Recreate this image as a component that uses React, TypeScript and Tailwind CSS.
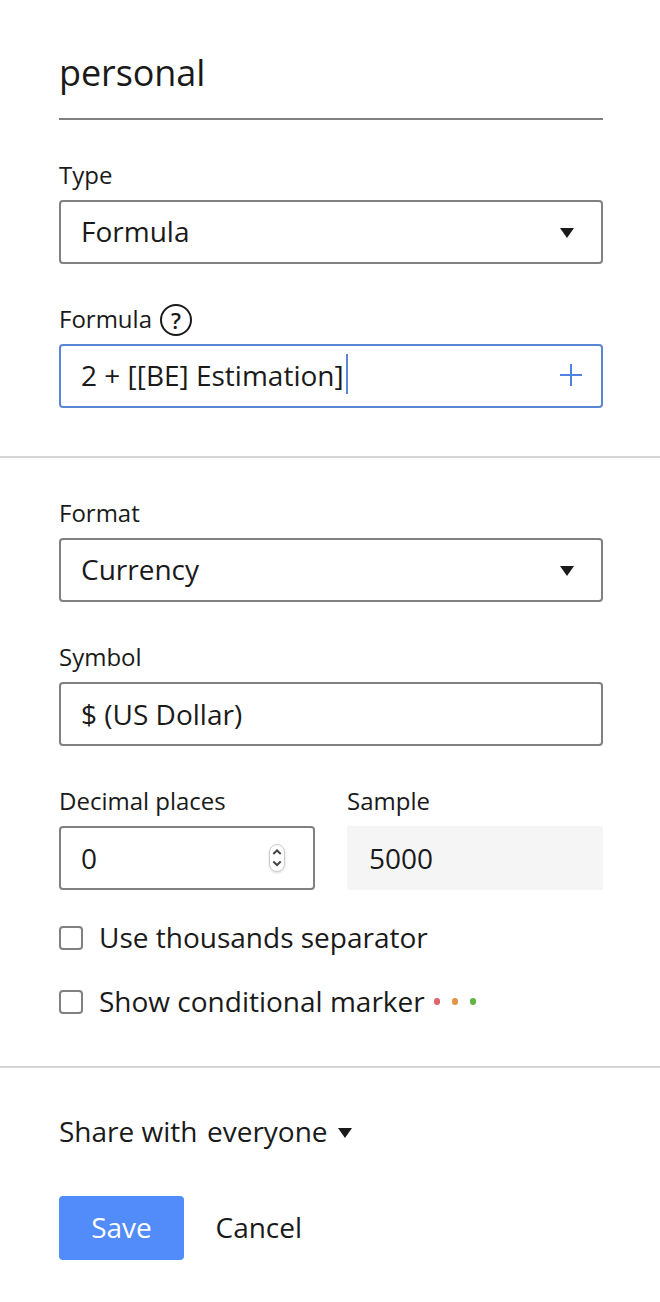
import type { ReactNode } from "react";

function Label({ children }: { children: ReactNode }) {
  return <div className="flex h-8 items-center gap-2 text-[24px] leading-8">{children}</div>;
}

function Triangle() {
  return (
    <svg width="14" height="10" viewBox="0 0 14 10" className="shrink-0">
      <path d="M0 0H14L7 10Z" fill="#1a1a1a" />
    </svg>
  );
}

function Select({ label, value }: { label: string; value: string }) {
  return (
    <div>
      <Label>
        <span className="pb-0.5">{label}</span>
      </Label>
      <button className="mt-2 flex h-16 w-full items-center justify-between rounded-[4px] border-2 border-[#808080] pr-[27px] pl-5 text-[28px]">
        <span className="pb-0.5">{value}</span>
        <span className="pt-0.5">
          <Triangle />
        </span>
      </button>
    </div>
  );
}

function Check({ label, children }: { label: string; children?: ReactNode }) {
  return (
    <div className="flex h-8 items-center text-[28px]">
      <span className="mr-4 size-6 rounded-[4px] border-2 border-[#808080]" />
      <span className="pb-0.5">{label}</span>
      {children}
    </div>
  );
}

export default function App() {
  return (
    <main className="h-[1302px] w-[660px] overflow-hidden bg-white font-['Open_Sans',sans-serif] text-[#1a1a1a]">
      <section className="h-[458px] border-b-2 border-[#d6d6d6] pr-[57px] pl-[59px] pt-[26px]">
        <h1 className="h-[94px] border-b-2 border-[#808080] text-[36px] leading-[94px] tracking-[-0.1px]">personal</h1>
        <div className="mt-10">
          <Select label="Type" value="Formula" />
        </div>
        <div className="mt-10">
          <Label>
            <span className="pb-0.5">Formula</span>
            <span className="flex size-8 items-center justify-center rounded-full border-2 border-[#1a1a1a] text-[22px] leading-none font-semibold">
              ?
            </span>
          </Label>
          <div className="mt-2 flex h-16 items-center rounded-[4px] border-2 border-[#5a86d6] pr-[19px] pl-5 text-[28px]">
            <span className="pb-0.5">2 + [[BE] Estimation]</span>
            <span className="mb-1 ml-0.5 h-10 w-0.5 bg-[#5a86d6]" />
            <svg className="mb-0.5 ml-auto" width="22" height="22" viewBox="0 0 22 22" stroke="#5082e2" strokeWidth="2">
              <path d="M11 0V22M0 11H22" />
            </svg>
          </div>
        </div>
      </section>
      <section className="h-[610px] border-b-2 border-[#d6d6d6] pr-[57px] pl-[59px] pt-10">
        <Select label="Format" value="Currency" />
        <div className="mt-10">
          <Label>
            <span className="pb-0.5">Symbol</span>
          </Label>
          <div className="mt-2 flex h-16 items-center rounded-[4px] border-2 border-[#808080] px-5 text-[28px]">$ (US Dollar)</div>
        </div>
        <div className="mt-10 flex gap-8">
          <div className="w-64">
            <Label>
              <span className="pb-0.5">Decimal places</span>
            </Label>
            <div className="mt-2 flex h-16 items-center justify-between rounded-[4px] border-2 border-[#808080] pr-7 pl-5 text-[28px]">
              <span>0</span>
              <svg width="16" height="28" viewBox="0 0 16 28" fill="none" className="drop-shadow-[0_1px_1px_rgba(0,0,0,0.15)]">
                <rect x=".5" y=".5" width="15" height="27" rx="7.5" fill="#fff" stroke="#ccc" />
                <path d="m4.3 10 3.7-3.5 3.7 3.5M4.3 17.5l3.7 3.5 3.7-3.5" stroke="#444" strokeWidth="2" />
              </svg>
            </div>
          </div>
          <div className="w-64">
            <Label>
              <span className="pb-0.5">Sample</span>
            </Label>
            <div className="mt-2 flex h-16 items-center rounded-[2px] bg-[#f5f5f5] px-[22px] text-[28px]">5000</div>
          </div>
        </div>
        <div className="mt-8 flex flex-col gap-8">
          <Check label="Use thousands separator" />
          <Check label="Show conditional marker">
            <span className="mb-px ml-[9px] flex gap-3">
              <i className="h-[7px] w-1.5 rounded-full bg-[#da656b]" />
              <i className="h-[7px] w-1.5 rounded-full bg-[#e39446]" />
              <i className="h-[7px] w-1.5 rounded-full bg-[#5eb540]" />
            </span>
          </Check>
        </div>
      </section>
      <section className="pr-[57px] pl-[59px] pt-12">
        <div className="flex h-8 items-center text-[28px]">
          <span className="pb-0.5">Share with</span>
          <span className="mr-[10px] ml-[9.5px] pb-0.5">everyone</span>
          <span className="pt-0.5">
            <Triangle />
          </span>
        </div>
        <div className="mt-12 flex items-center text-[28px]">
          <button className="h-16 w-[125px] rounded-[4px] bg-[#528bfa] pb-0.5 text-white">Save</button>
          <button className="ml-[31.5px] pb-0.5">Cancel</button>
        </div>
      </section>
    </main>
  );
}
